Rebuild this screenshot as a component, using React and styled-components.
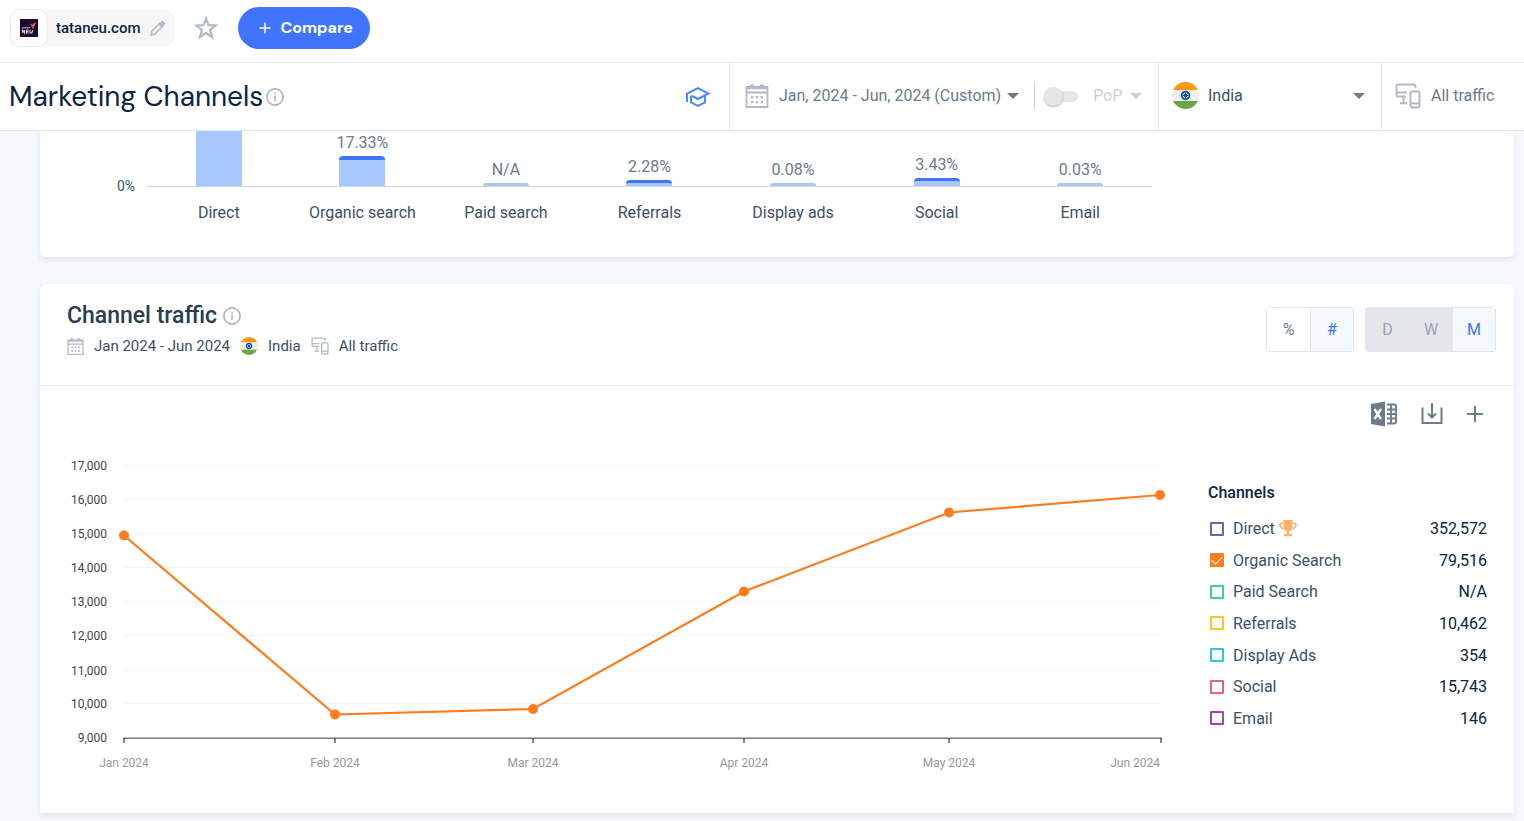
import React, { useState } from "react";
import styled, { createGlobalStyle } from "styled-components";

const barData = [
	{ name: "Direct", height: 133, cap: 4 },
	{ name: "Organic search", value: "17.33%", height: 30, cap: 4 },
	{ name: "Paid search", value: "N/A", height: 3, cap: 0 },
	{ name: "Referrals", value: "2.28%", height: 6, cap: 3 },
	{ name: "Display ads", value: "0.08%", height: 3, cap: 0 },
	{ name: "Social", value: "3.43%", height: 8, cap: 3 },
	{ name: "Email", value: "0.03%", height: 3, cap: 0 },
];

const channels = [
	{ name: "Direct", total: "352,572", color: "#5c6ea6", best: true },
	{ name: "Organic Search", total: "79,516", color: "#ff7c1d" },
	{ name: "Paid Search", total: "N/A", color: "#3ecfa0" },
	{ name: "Referrals", total: "10,462", color: "#ffc425" },
	{ name: "Display Ads", total: "354", color: "#2ec4e4" },
	{ name: "Social", total: "15,743", color: "#e85f8b" },
	{ name: "Email", total: "146", color: "#a145b0" },
];

const yTicks = [
	{ label: "17,000", y: 21 },
	{ label: "16,000", y: 55 },
	{ label: "15,000", y: 89 },
	{ label: "14,000", y: 123 },
	{ label: "13,000", y: 157 },
	{ label: "12,000", y: 191 },
	{ label: "11,000", y: 226 },
	{ label: "10,000", y: 259 },
];

const points = [
	{ label: "Jan 2024", x: 64, y: 91.5, anchor: "middle" },
	{ label: "Feb 2024", x: 275, y: 270.5, anchor: "middle" },
	{ label: "Mar 2024", x: 473, y: 265, anchor: "middle" },
	{ label: "Apr 2024", x: 684, y: 147.5, anchor: "middle" },
	{ label: "May 2024", x: 889, y: 68.5, anchor: "middle" },
	{ label: "Jun 2024", x: 1100, y: 51, anchor: "end" },
];

const CalendarIcon = ({ size = 24 }) => (
	<svg width={size} height={size} viewBox='0 0 24 24' fill='none' stroke='#b0bac8' aria-hidden='true'>
		<path d='M1.500 3h21v20h-21zM1.500 8.500h21' strokeWidth='1.800' />
		<path d='M1.500 4h21' strokeWidth='2.400' />
		<path d='M7 .5v3M17 .5v3' strokeWidth='4' />
		<path d='M6 13.200h12M6 18.200h12' strokeWidth='2.200' strokeDasharray='2.400 2.400' />
	</svg>
);

const DevicesIcon = ({ size = 26 }) => (
	<svg width={size} height={size} viewBox='0 0 26 26' fill='none' stroke='#b0bac8' strokeWidth='1.900' aria-hidden='true'>
		<path d='M20.500 5V3a1.500 1.500 0 0 0-1.500-1.500H3A1.500 1.500 0 0 0 1.500 3v9A1.500 1.500 0 0 0 3 13.500h8M1.500 9.500h10.500M8.500 14v6M5 20.300h7' />
		<rect x='15.500' y='8.500' width='9' height='16' rx='1.500' />
		<path d='M15.500 20.500h9' />
	</svg>
);

const IndiaFlag = ({ size = 27, id }) => (
	<svg width={size} height={size} viewBox='0 0 27 27' aria-hidden='true'>
		<clipPath id={id}>
			<circle cx='13.500' cy='13.500' r='13.500' />
		</clipPath>
		<g clipPath={`url(#${id})`}>
			<path d='M0 0h27v27H0z' fill='#f0f0f0' />
			<path d='M0 0h27v8H0z' fill='#ff9811' />
			<path d='M0 19h27v8H0z' fill='#6da544' />
		</g>
		<circle cx='13.500' cy='13.500' r='4.700' fill='#0052b4' />
		<circle cx='13.500' cy='13.500' r='3' fill='#f0f0f0' />
		<path d='M13.500 10.500v6M10.500 13.500h6M11.400 11.400l4.200 4.200M15.600 11.400l-4.200 4.200' stroke='#0052b4' strokeWidth='1' />
		<circle cx='13.500' cy='13.500' r='1.600' fill='#0052b4' />
	</svg>
);

const InfoIcon = () => (
	<svg width='18' height='18' viewBox='0 0 18 18' fill='none' stroke='#b2b2b2' strokeWidth='1.600' aria-hidden='true'>
		<circle cx='9' cy='9' r='8.100' />
		<path d='M9 7.800v5.400M9 4.600v1.800' />
	</svg>
);

const Caret = ({ color = "#6b7c8c" }) => (
	<svg width='12' height='6' viewBox='0 0 12 6' aria-hidden='true'>
		<path d='M0 0h12L6 6z' fill={color} />
	</svg>
);

const TrophyIcon = () => (
	<svg width='18' height='17' viewBox='0 0 18 17' fill='#ffb066' aria-hidden='true'>
		<path d='M4.500 0h9v7.500c0 2-1.500 3.500-3.500 3.700V14h3v2.300H5V14h3v-2.800C6 11 4.500 9.500 4.500 7.500z' />
		<path
			d='M4.500 3.200H2.200Q1 3.200 1 4.500v.8C1 7 2.500 8.200 5 8.500M13.500 3.200h2.300q1.200 0 1.200 1.300v.8c0 1.700-1.500 2.900-4 3.200'
			fill='none'
			stroke='#ffb066'
			strokeWidth='1.600'
		/>
	</svg>
);

const LineChart = () => (
	<svg viewBox='0 0 1110 340' width='100%' role='img' aria-label='Organic search traffic by month'>
		{yTicks.map((tick) => (
			<g key={tick.label}>
				<path d={`M64 ${tick.y + 0.5}H1101`} stroke='#f4f4f4' />
				<AxisText x='47' y={tick.y + 5} textAnchor='end'>
					{tick.label}
				</AxisText>
			</g>
		))}
		<AxisText x='47' y='298' textAnchor='end'>
			9,000
		</AxisText>
		<path d='M63 294.300H1102' stroke='#7d7d7d' strokeWidth='1.500' />
		{points.map((point) => (
			<g key={point.label}>
				<path d={`M${point.x + (point.anchor === "end" ? 1 : 0)} 294v5`} stroke='#444' strokeWidth='1.300' />
				<MonthText x={point.x} y='323' textAnchor={point.anchor}>
					{point.label}
				</MonthText>
			</g>
		))}
		<polyline
			points={points.map((point) => `${point.x},${point.y}`).join(" ")}
			fill='none'
			stroke='#ff7c1d'
			strokeWidth='2.200'
		/>
		{points.map((point) => (
			<circle key={point.label} cx={point.x} cy={point.y} r='5' fill='#ff7c1d' />
		))}
	</svg>
);

const App = () => {
	const [selected, setSelected] = useState(["Organic Search"]);

	const toggle = (name) =>
		setSelected(
			selected.includes(name) ? selected.filter((item) => item !== name) : [...selected, name]
		);

	return (
		<>
			<GlobalStyle />
			<TopBar>
				<SiteChip>
					<SiteLogo>
						<svg width='18' height='18' viewBox='0 0 18 18' aria-hidden='true'>
							<path d='M0 0h18v18H0z' fill='#1b0a2e' />
							<path d='M2 8.800h8' stroke='#a79db2' strokeWidth='1.600' strokeDasharray='1.700 .5' />
							<path d='M2.500 14v-3l2 3v-3M6.500 11v3h2M6.500 12.500h2M6.500 11h2M10 11v3h1.800l1-3' stroke='#d8d2de' fill='none' strokeWidth='1.100' />
							<path d='M10 4.500l3 6 1.500-4z' fill='#e6398c' />
							<path d='M12.500 9.500L13 5l3.500-2z' fill='#f58a32' />
							<path d='M10 4.500l2.500 1.700.5 3.500z' fill='#7c46d8' />
						</svg>
					</SiteLogo>
					<SiteName>tataneu.com</SiteName>
					<IconButton aria-label='Edit website'>
						<svg width='16' height='16' viewBox='0 0 16 16' fill='none' stroke='#b0bac8' strokeWidth='1.500' aria-hidden='true'>
							<path d='M1 15l1-4 8-8 3 3-8 8zM9 4l3 3' />
							<path d='M11.500 2.500l1-1 2 2-1 1z' fill='#b0bac8' />
						</svg>
					</IconButton>
				</SiteChip>
				<IconButton aria-label='Add to favorites'>
					<svg width='24' height='24' viewBox='0 0 24 24' fill='none' stroke='#b0bac8' strokeWidth='2.200' aria-hidden='true'>
						<path d='M12 2.500l2.500 6.700 7.200.3-5.600 4.500 1.900 7-6-4-6 4 1.900-7L2.300 9.500l7.200-.3z' />
					</svg>
				</IconButton>
				<CompareButton>
					<svg width='12' height='12' viewBox='0 0 12 12' stroke='#fff' strokeWidth='1.500' aria-hidden='true'>
						<path d='M6 .5v11M.5 6h11' />
					</svg>
					Compare
				</CompareButton>
			</TopBar>

			<PageHeader>
				<TitleArea>
					<PageTitle>Marketing Channels</PageTitle>
					<InfoIcon />
				</TitleArea>
				<LearnButton aria-label='Academy'>
					<svg width='26' height='22' viewBox='0 0 26 22' fill='none' stroke='#4a86ff' strokeWidth='2' aria-hidden='true'>
						<path d='M2 16V7.500L13 2l10.500 5.500L13 13 7 9.800M6 9.500v7l7 3.500 7-3.500v-7' />
					</svg>
				</LearnButton>
				<DateCell>
					<FilterButton>
						<CalendarIcon />
						<span>Jan, 2024 - Jun, 2024 (Custom)</span>
						<Caret />
					</FilterButton>
					<Divider />
					<Toggle>
						<input type='checkbox' role='switch' aria-label='Period over period' disabled />
						<span />
					</Toggle>
					<PopButton disabled>
						PoP <Caret color='#cbd0d6' />
					</PopButton>
				</DateCell>
				<CountryCell>
					<IndiaFlag id='flag-header' />
					<span>India</span>
					<Caret />
				</CountryCell>
				<TrafficCell>
					<DevicesIcon />
					<span>All traffic</span>
				</TrafficCell>
			</PageHeader>

			<Content>
				<OverviewCard>
					<ZeroLabel>0%</ZeroLabel>
					<div>
						<Bars>
							{barData.map((bar) => (
								<BarColumn key={bar.name}>
									{bar.value && <BarValue>{bar.value}</BarValue>}
									<Bar $cap={bar.cap} style={{ height: bar.height }} />
								</BarColumn>
							))}
						</Bars>
						<BarNames>
							{barData.map((bar) => (
								<span key={bar.name}>{bar.name}</span>
							))}
						</BarNames>
					</div>
				</OverviewCard>

				<ChannelCard>
					<CardHeader>
						<div>
							<CardTitle>
								Channel traffic <InfoIcon />
							</CardTitle>
							<Subtitle>
								<CalendarIcon size={17} />
								<span>Jan 2024 - Jun 2024</span>
								<IndiaFlag size={18} id='flag-card' />
								<span>India</span>
								<DevicesIcon size={18} />
								<span>All traffic</span>
							</Subtitle>
						</div>
						<Switchers>
							<Switcher>
								<SwitchButton>%</SwitchButton>
								<SwitchButton $active>#</SwitchButton>
							</Switcher>
							<Switcher>
								<SwitchButton disabled>D</SwitchButton>
								<SwitchButton disabled>W</SwitchButton>
								<SwitchButton $active>M</SwitchButton>
							</Switcher>
						</Switchers>
					</CardHeader>

					<Tools>
						<IconButton aria-label='Download Excel'>
							<svg width='26' height='26' viewBox='0 0 26 26' fill='none' stroke='#6b7c8c' aria-hidden='true'>
								<path d='M0 3l14-2.500v25L0 23z' fill='#6b7c8c' stroke='none' />
								<path d='M3.500 8l6.500 10M10 8l-6.500 10' stroke='#fff' strokeWidth='2.400' />
								<path d='M16 3.500h7.500q1.500 0 1.500 1.500v16q0 1.500-1.500 1.500H16M16 8.500h9M16 13h9M16 17.500h9M20 3.500v19' strokeWidth='1.900' />
							</svg>
						</IconButton>
						<IconButton aria-label='Download image'>
							<svg width='22' height='22' viewBox='0 0 22 22' fill='none' stroke='#6b7c8c' strokeWidth='2' aria-hidden='true'>
								<path d='M1.500 4.500V20h19V4.500M11 0v14M7 10.500l4 4 4-4' />
							</svg>
						</IconButton>
						<IconButton aria-label='Add to dashboard'>
							<svg width='16' height='16' viewBox='0 0 16 16' stroke='#6b7c8c' strokeWidth='2' aria-hidden='true'>
								<path d='M8 0v16M0 8h16' />
							</svg>
						</IconButton>
					</Tools>

					<ChartRow>
						<LineChart />
						<Legend>
							<h3>Channels</h3>
							<LegendList>
								{channels.map((channel) => (
									<LegendRow key={channel.name}>
										<Checkbox
											type='checkbox'
											$color={channel.color}
											checked={selected.includes(channel.name)}
											onChange={() => toggle(channel.name)}
										/>
										<LegendName>
											{channel.name}
											{channel.best && <TrophyIcon />}
										</LegendName>
										<LegendTotal>{channel.total}</LegendTotal>
									</LegendRow>
								))}
							</LegendList>
						</Legend>
					</ChartRow>
				</ChannelCard>
			</Content>
		</>
	);
};

const GlobalStyle = createGlobalStyle`
	* {
		box-sizing: border-box;
	}

	body {
		margin: 0;
		background: #f5f8fd;
		color: #6b7c8c;
		font-family: Roboto, sans-serif;
		font-size: 16px;
	}

	svg {
		display: block;
		flex-shrink: 0;
	}

	button {
		border: 0;
		padding: 0;
		background: none;
		color: inherit;
		font: inherit;
		cursor: pointer;
	}
`;

const TopBar = styled.header`
	display: flex;
	align-items: center;
	height: 63px;
	padding: 0 10px 7px;
	background: #fff;
	border-bottom: 1px solid #e6e9ec;
`;

const SiteChip = styled.div`
	display: flex;
	align-items: center;
	height: 36px;
	margin-right: 19px;
	padding-right: 9px;
	border-radius: 10px;
	background: #f7f7f7;
`;

const SiteLogo = styled.div`
	display: grid;
	place-items: center;
	width: 38px;
	height: 38px;
	border: 1px solid #e6e9ec;
	border-radius: 10px;
	background: #fff;
`;

const SiteName = styled.span`
	margin: 0 10px 0 8px;
	color: #092540;
	font-size: 15px;
	font-weight: 500;
`;

const IconButton = styled.button`
	display: grid;
	place-items: center;
`;

const CompareButton = styled.button`
	display: flex;
	align-items: center;
	gap: 9px;
	height: 42px;
	margin-left: 20px;
	padding: 0 17px 0 21px;
	border-radius: 21px;
	background: #3e74fe;
	color: #fff;
	font-family: "DM Sans", Inter, sans-serif;
	font-size: 16px;
	font-weight: 700;
`;

const PageHeader = styled.div`
	display: flex;
	height: 68px;
	background: #fff;
	border-bottom: 1px solid #e6e9ec;
	white-space: nowrap;
`;

const TitleArea = styled.div`
	display: flex;
	flex: 1;
	align-items: center;
	gap: 3px;
	padding-left: 9px;
`;

const PageTitle = styled.h1`
	margin: 0;
	color: #092540;
	font-family: "DM Sans", Inter, sans-serif;
	font-size: 28px;
	font-weight: 400;
	line-height: 36px;
`;

const LearnButton = styled(IconButton)`
	margin-right: 18px;
`;

const HeaderCell = styled.div`
	display: flex;
	align-items: center;
	border-left: 1px solid #e6e9ec;
`;

const DateCell = styled(HeaderCell)`
	width: 429px;
	padding: 0 10px 2px 15px;
`;

const FilterButton = styled.button`
	display: flex;
	align-items: center;
	gap: 6px;

	span {
		margin-left: 4px;
	}
`;

const Divider = styled.div`
	width: 1px;
	height: 27px;
	margin: 0 9px 0 15px;
	background: #cbd0d6;
`;

const Toggle = styled.label`
	position: relative;
	width: 34px;
	height: 20px;
	margin-right: 15px;

	input {
		position: absolute;
		opacity: 0;
	}

	span {
		display: block;
		height: 11px;
		margin: 5px 0 0 8px;
		border-radius: 6px;
		background: #e3e7ea;
	}

	span::before {
		content: "";
		position: absolute;
		top: 1px;
		left: 0;
		width: 19px;
		height: 19px;
		border-radius: 50%;
		background: #e3e7ea;
		box-shadow: 0 1px 2px rgba(0, 0, 0, 0.3);
	}
`;

const PopButton = styled.button`
	display: flex;
	align-items: center;
	gap: 8px;
	color: #cbd0d6;
`;

const CountryCell = styled(HeaderCell).attrs({ as: "button" })`
	width: 223px;
	padding: 0 16px 2px 13px;
	border-left: 1px solid #e6e9ec;
	color: #3a5166;

	span {
		flex: 1;
		margin-left: 9px;
		text-align: left;
	}
`;

const TrafficCell = styled(HeaderCell)`
	width: 143px;
	gap: 10px;
	padding: 0 0 2px 13px;
`;

const Content = styled.main`
	padding: 0 10px 8px 40px;
`;

const Card = styled.section`
	background: #fff;
	box-shadow: 0 3px 6px rgba(14, 30, 62, 0.08);
`;

const OverviewCard = styled(Card)`
	display: grid;
	grid-template-columns: 95px 1fr;
	gap: 12px;
	margin-bottom: 27px;
	padding: 0 362px 34px 0;
	border-radius: 0 0 6px 6px;
`;

const ChannelCard = styled(Card)`
	border-radius: 6px 6px 0 0;
`;

const ZeroLabel = styled.span`
	margin-top: 47px;
	color: #3a5166;
	font-size: 14px;
	line-height: 16px;
	text-align: right;
`;

const Bars = styled.div`
	display: grid;
	grid-template-columns: repeat(7, 1fr);
	height: 56px;
	overflow: hidden;
	border-bottom: 1px solid #d3d7dc;
`;

const BarColumn = styled.div`
	display: flex;
	flex-direction: column;
	align-items: center;
	justify-content: flex-end;
	height: 55px;
`;

const BarValue = styled.span`
	margin-bottom: 4px;
	line-height: 18px;
`;

const Bar = styled.div`
	flex-shrink: 0;
	width: 46px;
	border-top: ${(props) => props.$cap}px solid #3e74fe;
	border-radius: 4px 4px 0 0;
	background: #a9c7ff;
`;

const BarNames = styled.div`
	display: grid;
	grid-template-columns: repeat(7, 1fr);
	margin-top: 16px;
	color: #3a5166;
	line-height: 20px;
	text-align: center;
`;

const CardHeader = styled.div`
	display: flex;
	justify-content: space-between;
	height: 102px;
	padding: 17px 18px 0 27px;
	border-bottom: 1px solid #e6e9ec;
`;

const CardTitle = styled.h2`
	display: flex;
	align-items: center;
	gap: 6px;
	margin: 0;
	color: #2a3e52;
	font-size: 23px;
	font-weight: 500;
	line-height: 30px;
`;

const Subtitle = styled.div`
	display: flex;
	align-items: center;
	gap: 10px;
	margin-top: 5px;
	color: #3a5166;
	font-size: 15px;
	line-height: 20px;
`;

const Switchers = styled.div`
	display: flex;
	gap: 11px;
	margin-top: 6px;
`;

const Switcher = styled.div`
	display: flex;
	height: 45px;
	border: 1px solid #e3e7ea;
	border-radius: 3px;
`;

const SwitchButton = styled.button`
	width: 43px;
	background: ${(props) => (props.$active ? "#f5f8fd" : props.disabled ? "#e3e7ea" : "#fff")};
	color: ${(props) => (props.$active ? "#3e74fe" : props.disabled ? "#98a4af" : "#6b7c8c")};

	& + & {
		border-left: 1px solid #e3e7ea;
	}
`;

const Tools = styled.div`
	display: flex;
	align-items: center;
	justify-content: flex-end;
	gap: 24px;
	height: 58px;
	padding: 0 31px 2px 0;
`;

const ChartRow = styled.div`
	display: flex;
	align-items: flex-start;
	justify-content: space-between;
	padding: 0 27px 29px 20px;

	> svg {
		flex: 1;
		min-width: 0;
	}
`;

const Legend = styled.div`
	width: 279px;
	padding-top: 39px;
	margin-left: 38px;

	h3 {
		margin: 0 0 10px;
		color: #092540;
		font-size: 16px;
		font-weight: 500;
		line-height: 20px;
	}
`;

const LegendList = styled.div`
	display: grid;
	grid-auto-rows: 1fr;
	height: 221px;
`;

const LegendRow = styled.label`
	display: flex;
	align-items: center;
	cursor: pointer;
`;

const Checkbox = styled.input`
	appearance: none;
	width: 14px;
	height: 14px;
	margin: 0 9px 0 2px;
	border: 2px solid ${(props) => props.$color};
	border-radius: 1px;

	&:checked {
		background: ${(props) => props.$color};
	}

	&:checked::before {
		content: "";
		display: block;
		width: 9px;
		height: 5px;
		margin-top: 1px;
		border: solid #fff;
		border-width: 0 0 1px 1px;
		transform: rotate(-45deg);
	}
`;

const LegendName = styled.span`
	display: flex;
	flex: 1;
	align-items: center;
	gap: 4px;
	color: #3a5166;
`;

const LegendTotal = styled.span`
	color: #092540;
`;

const AxisText = styled.text`
	fill: #444;
	font-size: 12px;
`;

const MonthText = styled.text`
	fill: #999;
	font-size: 12px;
`;

export default App;
